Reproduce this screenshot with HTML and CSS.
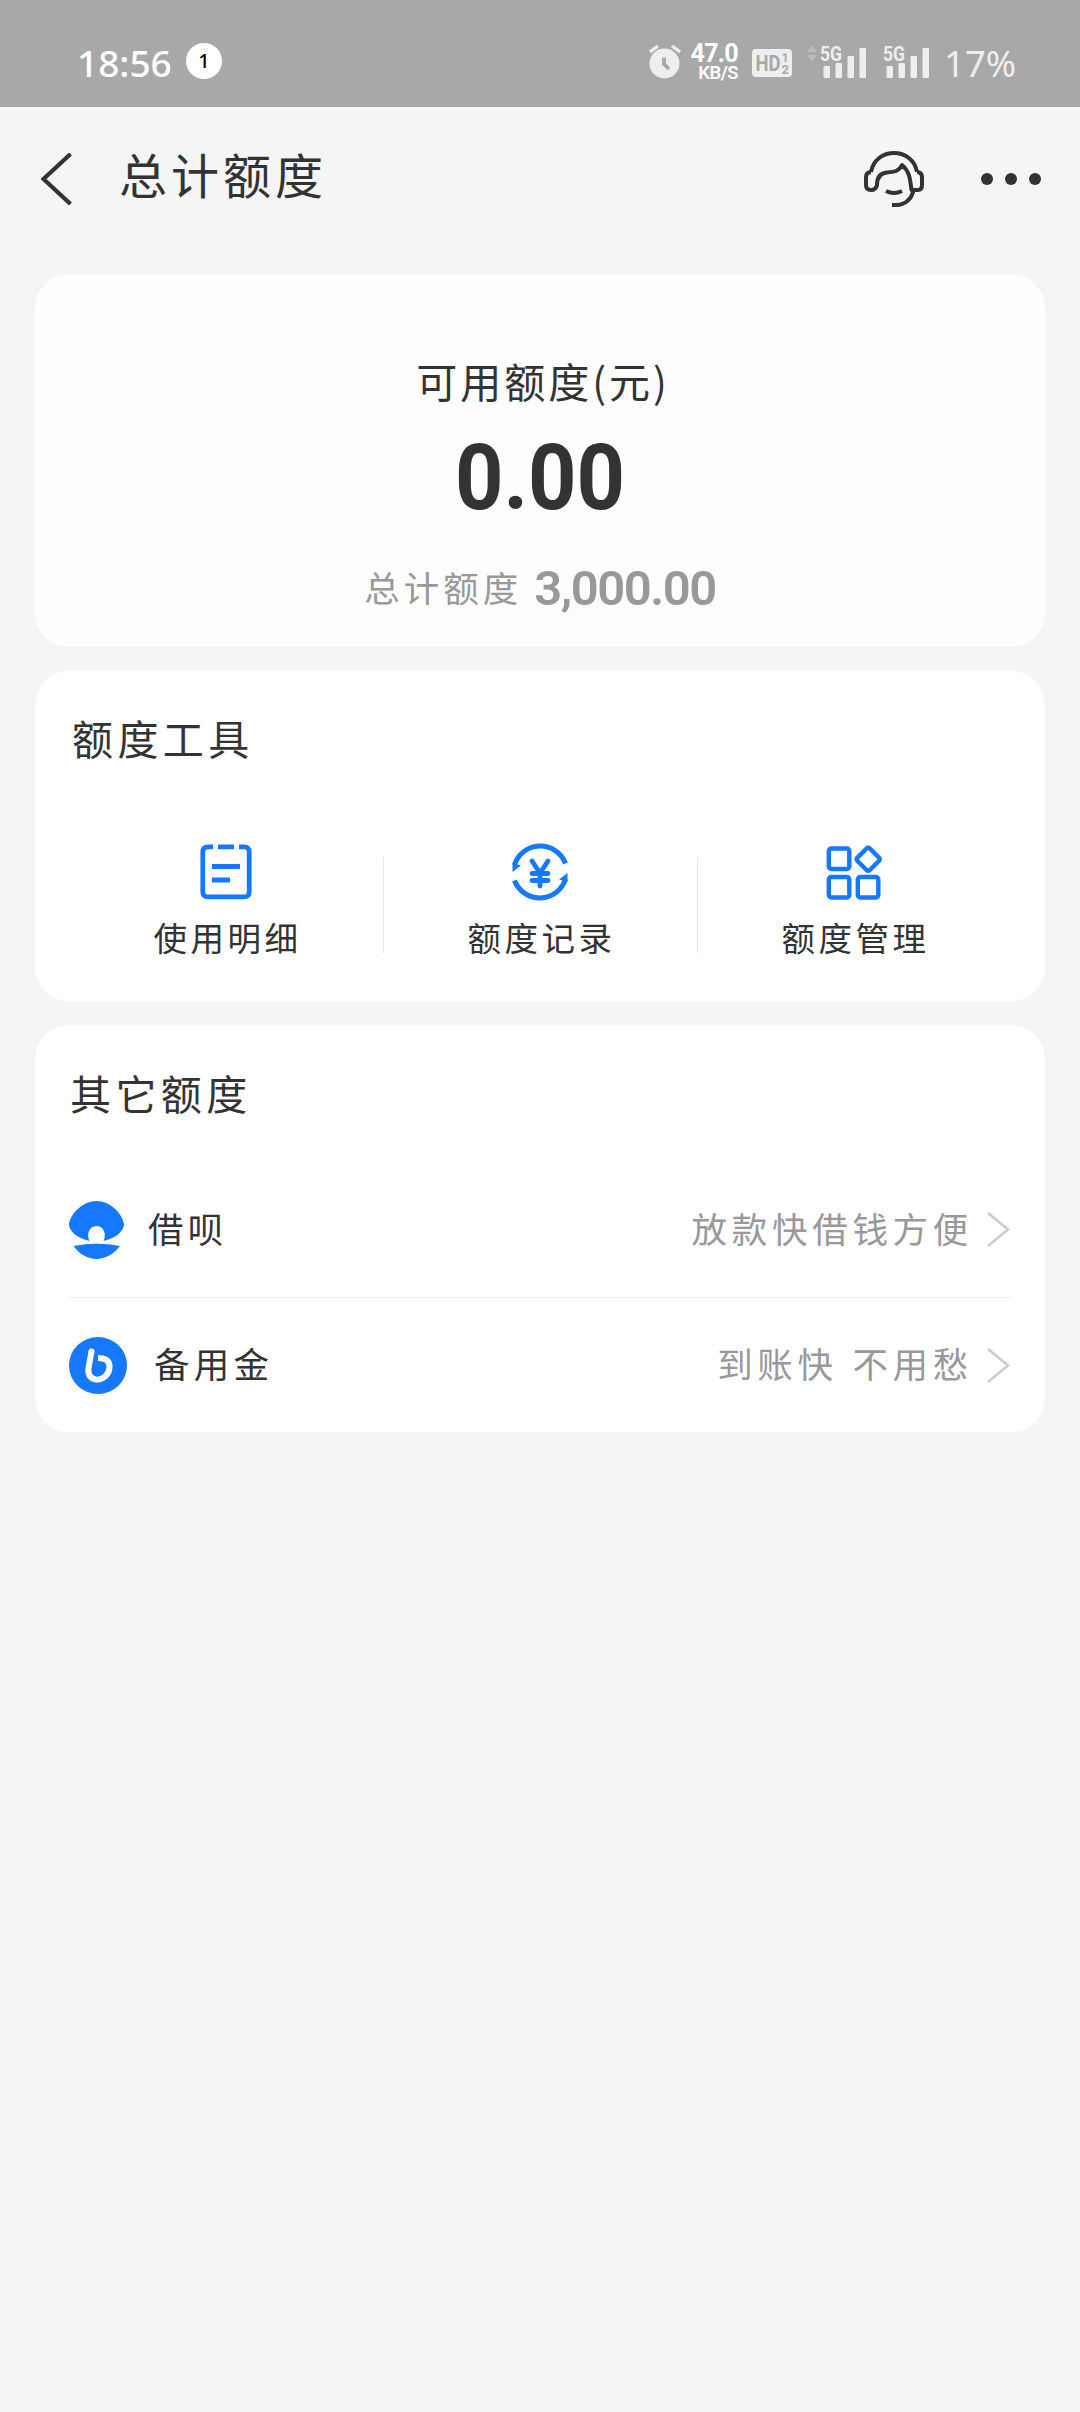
FILE: index.html
```html
<!DOCTYPE html>
<html lang="zh-CN">
<head>
<meta charset="utf-8">
<title>总计额度</title>
<link rel="stylesheet" href="styles.css">
</head>
<body>
<header class="status">
  <span class="clock">18:56</span>
  <span class="badge">1</span>
  <div class="status-right">
    <svg class="alarm" width="32" height="36" viewBox="0 0 32 36"><circle cx="15.500" cy="19.500" r="15" fill="#eee"/><path d="M1 8l8-6M23 2l8 6" stroke="#eee" stroke-width="3.400"/><path d="M15 13.500v6.500l5 5" fill="none" stroke="#a8a8a8" stroke-width="3.800"/></svg>
    <div class="speed"><span class="rate">47.0</span><span class="unit">KB/S</span></div>
    <svg class="hd" width="40" height="28" viewBox="0 0 40 28"><rect width="40" height="28" rx="4" fill="#eee"/><g fill="#a8a8a8" font-family="Roboto, sans-serif" font-weight="700"><text x="3.500" y="22" font-size="22" textLength="25" lengthAdjust="spacingAndGlyphs">HD</text><text x="29.500" y="13" font-size="12.500">1</text><text x="29.500" y="24.500" font-size="13">2</text></g></svg>
    <svg class="signal-a" width="60" height="38" viewBox="0 -4 60 38"><path d="M0 7l5-6 5 6zM0 10h10l-5 6z" fill="#bcbcbc"/><g fill="#eee"><rect x="16.500" y="21" width="6.500" height="12" rx="1"/><rect x="28.500" y="18" width="6.500" height="15" rx="1"/><rect x="40.500" y="11" width="6.500" height="22" rx="1"/><rect x="52.500" y="3" width="6.500" height="30" rx="1"/><text x="13" y="16" font-family="Roboto, sans-serif" font-weight="700" font-size="21" textLength="22" lengthAdjust="spacingAndGlyphs">5G</text></g></svg>
    <svg class="signal-b" width="47" height="38" viewBox="0 -4 47 38"><g fill="#eee"><rect x="3.500" y="21" width="6.500" height="12" rx="1"/><rect x="15.500" y="18" width="6.500" height="15" rx="1"/><rect x="27.500" y="11" width="6.500" height="22" rx="1"/><rect x="39.500" y="3" width="6.500" height="30" rx="1"/><text x="0" y="16" font-family="Roboto, sans-serif" font-weight="700" font-size="21" textLength="22" lengthAdjust="spacingAndGlyphs">5G</text></g></svg>
    <span class="battery">17%</span>
  </div>
</header>

<nav class="nav">
  <svg width="32" height="52" viewBox="0 0 32 52"><path d="M29.500 1L2.500 26l27 25" fill="none" stroke="#333" stroke-width="4.200"/></svg>
  <h1 class="nav-title">总计额度</h1>
  <svg class="service" width="60" height="56" viewBox="0 0 60 56" fill="none" stroke="#333" stroke-width="4" stroke-linejoin="round"><path d="M7 21C9 9 19 2 30 2s21 7 23 19"/><path d="M7 21H6q-4 1-4 5v8q0 5 5 5t6-5c0-8 4-12 10-12.500 7-.5 12-1 15-7.500 7 6 8 12 9.500 25H54q4 0 4-5v-8q0-4-4-5h-1"/><path d="M49.500 38c-1 10-9 16-17 16h-4.500M22 40q8 4 16 0"/></svg>
  <svg class="more" width="60" height="12" viewBox="0 0 60 12" fill="#333"><circle cx="6" cy="6" r="6"/><circle cx="30" cy="6" r="6"/><circle cx="54" cy="6" r="6"/></svg>
</nav>

<main class="cards">
  <section class="card summary">
    <div class="available">可用额度(元)</div>
    <div class="amount">0.00</div>
    <div class="total"><span class="total-label">总计额度</span><span class="total-value">3,000.00</span></div>
  </section>

  <section class="card tools">
    <h2 class="heading">额度工具</h2>
    <div class="tool-grid">
      <a class="tool">
        <svg width="58" height="58" viewBox="0 0 58 58" fill="none" stroke="#1677ff" stroke-width="4.800"><path d="M16 3.900H11q-5.200 0-5.200 5.200v39.600q0 5.200 5.200 5.200h36q5.200 0 5.200-5.200V9.100q0-5.200-5.200-5.200H42M21 3.900h16M15 23.500h28M15 37h18"/></svg>
        <span>使用明细</span>
      </a>
      <a class="tool">
        <svg width="58" height="58" viewBox="0 0 58 58" fill="none" stroke="#1677ff" stroke-width="5"><path d="M3.500 22A27 27 0 0 1 54.500 20.500M54.500 36A27 27 0 0 1 3.500 37.500"/><path d="M1.500 29V20l8.500 2.500zM56.500 30v9L48 36.500z" fill="#1677ff" stroke="none"/><path d="M21 18l8 12 8-12M29 29v14M21 30.500h16M21 37.500h16" stroke-linecap="round" stroke-width="4.800"/></svg>
        <span>额度记录</span>
      </a>
      <a class="tool">
        <svg width="58" height="58" viewBox="0 0 58 58" fill="none" stroke="#1677ff" stroke-width="4.400"><rect x="3.800" y="5.500" width="20.500" height="20.500" rx="2.500"/><rect x="3.800" y="34" width="20.500" height="20.500" rx="2.500"/><rect x="32.800" y="34" width="20.500" height="20.500" rx="2.500"/><rect x="34.500" y="7.500" width="17.500" height="17.500" rx="2" transform="rotate(45 43.200 16.200)"/></svg>
        <span>额度管理</span>
      </a>
    </div>
  </section>

  <section class="card others">
    <h2 class="heading">其它额度</h2>
    <a class="row">
      <svg class="row-icon" width="55" height="58" viewBox="0 0 55 58" fill="#1677ff"><path d="M20.500 40C9 37 0 31 0 23 2 12 14 0 27.500 0S53 12 55 23c0 8-9 14-20.500 17 3-6 1-15-7-15s-10 9-7 15zM4.500 45q23-4.500 46.500 0C45 53 36 58 27.500 58S10 53 4.500 45z"/></svg>
      <span class="row-name">借呗</span>
      <span class="row-note">放款快借钱方便</span>
      <svg class="arrow" width="23" height="35" viewBox="0 0 23 35"><path d="M1 1l20 16.500L1 34" fill="none" stroke="#ccc" stroke-width="2.600"/></svg>
    </a>
    <a class="row">
      <svg class="row-icon wide" width="58" height="57" viewBox="0 0 58 57"><ellipse cx="29" cy="28.500" rx="29" ry="28.500" fill="#1677ff"/><path d="M22.500 14.500L19.500 31C17 47 38.500 46 40.500 31 41.200 24 37 21 29 21" fill="none" stroke="#fff" stroke-width="6"/><circle cx="22.500" cy="14.500" r="3" fill="#fff"/></svg>
      <span class="row-name">备用金</span>
      <span class="row-note">到账快 <i></i>不用愁</span>
      <svg class="arrow" width="23" height="35" viewBox="0 0 23 35"><path d="M1 1l20 16.500L1 34" fill="none" stroke="#ccc" stroke-width="2.600"/></svg>
    </a>
  </section>
</main>
</body>
</html>
```
FILE: styles.css
```css
* { box-sizing: border-box; }
body {
  margin: 0;
  width: 1080px;
  min-height: 2412px;
  background: #f5f5f5;
  color: #333;
  font-family: KaiTi, STKaiti, "Noto Sans CJK SC", sans-serif;
}
svg { display: block; flex: none; }
h1, h2 { margin: 0; font-weight: 400; }

.status {
  display: flex;
  align-items: center;
  height: 107px;
  padding: 18px 65px 0 77px;
  background: #a8a8a8;
  color: #fff;
  font-family: "Noto Sans", sans-serif;
}
.clock { width: 109px; font-size: 37px; font-weight: 500; line-height: 40px; white-space: nowrap; }
.badge {
  width: 36px;
  height: 36px;
  margin-top: -3px;
  border-radius: 50%;
  background: #fff;
  color: #000;
  font-size: 20px;
  font-weight: 500;
  line-height: 36px;
  text-align: center;
}
.status-right { display: flex; align-items: center; margin-left: auto; }
.alarm { margin-top: -1px; }
.speed {
  display: flex;
  flex-direction: column;
  align-items: flex-end;
  width: 47px;
  margin: 0 14px 0 10px;
  font-family: Roboto, sans-serif;
  font-weight: 700;
}
.rate { font-size: 25px; line-height: 21px; letter-spacing: -0.700px; }
.unit { font-size: 18.500px; line-height: 19px; font-weight: 600; letter-spacing: -0.500px; }
.hd { margin-right: 15px; }
.signal-a, .signal-b { margin-top: -6px; }
.signal-a { margin-right: 16px; }
.signal-b { margin-right: 14px; }
.battery { width: 71px; color: #eee; font-size: 36.500px; line-height: 40px; white-space: nowrap; }

.nav {
  display: flex;
  align-items: center;
  height: 167px;
  padding: 0 39px 23px 41px;
}
.nav-title { margin: -13px 0 0 46px; font-size: 48px; line-height: 60px; letter-spacing: 4px; }
.service { margin-left: auto; }
.more { margin-left: 57px; }

.cards { display: flex; flex-direction: column; gap: 24px; padding: 0 35px; }
.card { border-radius: 34px; background: #fff; }
.heading { font-size: 41px; line-height: 60px; letter-spacing: 4.400px; }

.summary { height: 373px; padding-top: 76px; background: #fdfdfd; text-align: center; }
.available { padding-left: 6px; font-size: 41px; line-height: 60px; letter-spacing: 3px; }
.amount {
  margin-top: 23px;
  font-family: Roboto, sans-serif;
  font-size: 91px;
  font-weight: 700;
  line-height: 90px;
  transform: scaleX(.93);
}
.total {
  display: flex;
  align-items: center;
  justify-content: center;
  height: 60px;
  margin-top: 35px;
  color: #999;
}
.total-label { margin-top: -4px; font-size: 35.500px; letter-spacing: 4px; }
.total-value { margin-left: 12px; font-family: Roboto, sans-serif; font-size: 49px; font-weight: 600; letter-spacing: -1.500px; }

.tools { height: 330px; padding: 36px 34px 0; }
.tools .heading { padding-left: 3px; }
.tool-grid { display: grid; grid-template-columns: repeat(3, 1fr); margin-top: 76px; }
.tool { display: flex; flex-direction: column; align-items: center; position: relative; }
.tool span { margin-top: 11px; padding-left: 3px; font-size: 33.500px; line-height: 50px; letter-spacing: 3.500px; }
.tool + .tool::before {
  content: "";
  position: absolute;
  left: 0;
  top: 14px;
  width: 1px;
  height: 96px;
  background: #e8e8e8;
}

.others { height: 407px; padding: 37px 33px 0; }
.others .heading { height: 100px; padding-left: 2px; }
.row { display: flex; align-items: center; height: 135px; padding: 0 2px 0 1px; }
.row + .row { border-top: 1px solid #eee; }
.row-name { margin: -4px 0 0 24px; font-size: 35.500px; line-height: 50px; letter-spacing: 4.300px; }
.wide + .row-name { margin-left: 27px; }
.row-note { margin: -4px 0 0 auto; color: #999; font-size: 35.500px; line-height: 50px; letter-spacing: 4.700px; }
.row-note i { display: inline-block; width: 2px; }
.arrow { margin-left: 14px; }
```
